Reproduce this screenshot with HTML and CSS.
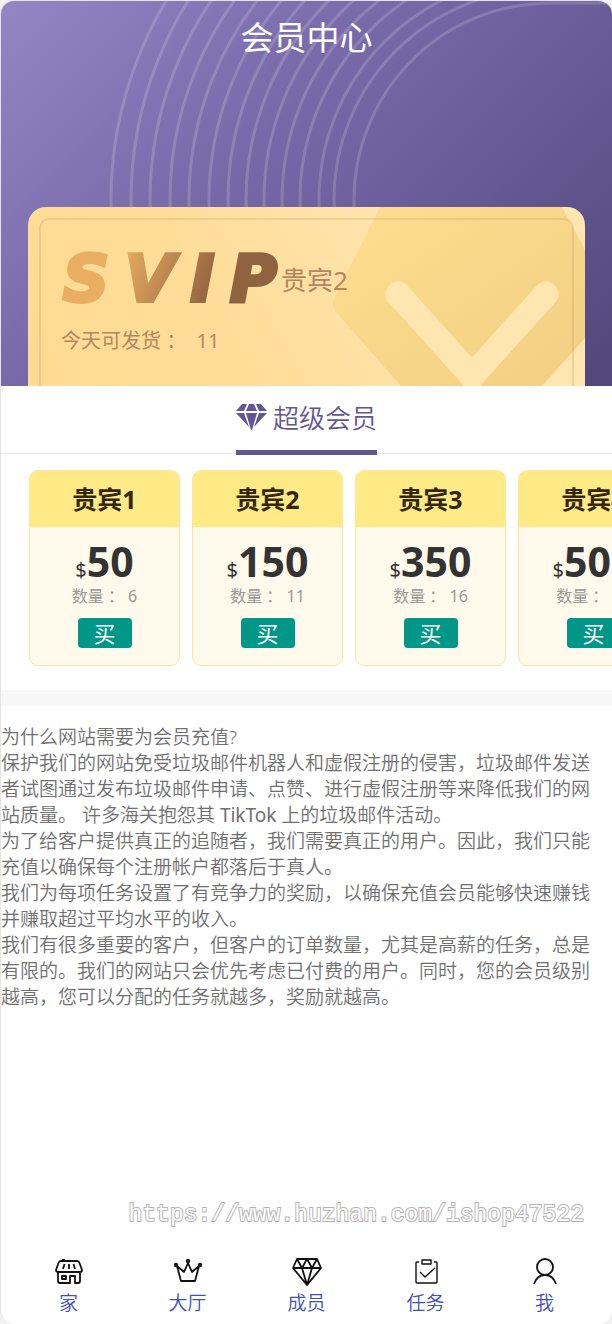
FILE: index.html
```html
<!DOCTYPE html>
<html lang="zh-CN">
<head>
    <meta charset="UTF-8">
    <meta name="viewport" content="width=device-width, initial-scale=1.0">
    <title>会员中心</title>
    <link rel="stylesheet" href="styles.css">
</head>
<body>
    <div class="page">
        <header class="hero">
            <svg class="hero-rings" width="612" height="386" viewBox="0 0 612 386" fill="none" stroke="#fff" stroke-opacity=".16" stroke-width="3" aria-hidden="true">
                <circle cx="497" cy="199" r="387"/>
                <circle cx="506" cy="199" r="376"/>
                <circle cx="504" cy="199" r="355"/>
                <circle cx="510" cy="199" r="341"/>
                <circle cx="513" cy="199" r="325"/>
                <circle cx="519" cy="199" r="311"/>
                <circle cx="525" cy="199" r="298"/>
                <circle cx="527" cy="199" r="282"/>
                <circle cx="530" cy="199" r="267"/>
                <circle cx="535" cy="199" r="254"/>
                <circle cx="540" cy="199" r="241"/>
                <circle cx="542" cy="199" r="224"/>
                <circle cx="544" cy="199" r="211"/>
                <path d="M353 212V199C353 96 434 3 550 2H612"/>
            </svg>
            <h1 class="hero-title">会员中心</h1>
            <section class="vip-card">
                <svg class="vip-card-art" width="257" height="179" viewBox="0 0 257 179" aria-hidden="true">
                    <defs>
                        <linearGradient id="hex" x1="0" y1="0" x2="1" y2="1">
                            <stop offset="0" stop-color="#ffde90"/>
                            <stop offset="1" stop-color="#f2cf82"/>
                        </linearGradient>
                    </defs>
                    <path d="M52 0H234L257 43V131L214 179H73L8 105Q3 98 6 91Z" fill="url(#hex)"/>
                    <path d="M70 87L144 169L218 87" fill="none" stroke="#ffe5b0" stroke-width="25" stroke-linecap="round"/>
                </svg>
                <div class="vip-card-inner">
                    <div class="vip-level">
                        <strong class="vip-logo"><span>S</span><span>V</span><span>I</span><span>P</span></strong>
                        <span class="vip-name">贵宾2</span>
                    </div>
                    <p class="vip-today">今天可发货 ：&nbsp; 11</p>
                </div>
            </section>
        </header>

        <div class="tabs">
            <button type="button" class="tab">
                <svg width="31" height="27" viewBox="0 0 31 27" fill="#635694" aria-hidden="true">
                    <path d="M6 0H11L8 7H0ZM13 0H18L21 7H10ZM20 0H25L31 7H23ZM0 9H8L13 23ZM10 9H21L16 26H15ZM23 9H31L18 23Z"/>
                </svg>
                <span>超级会员</span>
            </button>
        </div>

        <section class="plans">
            <article class="plan">
                <h2 class="plan-name">贵宾1</h2>
                <div class="plan-body">
                    <p class="plan-price"><small>$</small>50</p>
                    <p class="plan-count">数量 ： 6</p>
                    <button type="button" class="buy">买</button>
                </div>
            </article>
            <article class="plan">
                <h2 class="plan-name">贵宾2</h2>
                <div class="plan-body">
                    <p class="plan-price"><small>$</small>150</p>
                    <p class="plan-count">数量 ： 11</p>
                    <button type="button" class="buy">买</button>
                </div>
            </article>
            <article class="plan">
                <h2 class="plan-name">贵宾3</h2>
                <div class="plan-body">
                    <p class="plan-price"><small>$</small>350</p>
                    <p class="plan-count">数量 ： 16</p>
                    <button type="button" class="buy">买</button>
                </div>
            </article>
            <article class="plan">
                <h2 class="plan-name">贵宾4</h2>
                <div class="plan-body">
                    <p class="plan-price"><small>$</small>500</p>
                    <p class="plan-count">数量 ： 21</p>
                    <button type="button" class="buy">买</button>
                </div>
            </article>
        </section>

        <main class="about">
            <p>为什么网站需要为会员充值?</p>
            <p>保护我们的网站免受垃圾邮件机器人和虚假注册的侵害，垃圾邮件发送者试图通过发布垃圾邮件申请、点赞、进行虚假注册等来降低我们的网站质量。 许多海关抱怨其 <span class="latin">TikTok</span> 上的垃圾邮件活动。</p>
            <p>为了给客户提供真正的追随者，我们需要真正的用户。因此，我们只能充值以确保每个注册帐户都落后于真人。</p>
            <p>我们为每项任务设置了有竞争力的奖励，以确保充值会员能够快速赚钱并赚取超过平均水平的收入。</p>
            <p>我们有很多重要的客户，但客户的订单数量，尤其是高薪的任务，总是有限的。我们的网站只会优先考虑已付费的用户。同时，您的会员级别越高，您可以分配的任务就越多，奖励就越高。</p>
        </main>

        <p class="watermark">https://www.huzhan.com/ishop47522</p>

        <nav class="navbar">
            <a href="#home">
                <svg width="28" height="28" viewBox="0 0 28 28" stroke-width="1.8" aria-hidden="true">
                    <path d="M6 3H22Q24 3 24.500 5L27 12Q27 14 25 14H3Q1 14 1 12L3.500 5Q4 3 6 3ZM3 14V23Q3 25 5 25H15V18H20V25H23Q25 25 25 23V14M7 18H11V21H7ZM9.500 6L8 11M14 6V11M18.500 6L20 11M7 2H10"/>
                </svg>
                <span>家</span>
            </a>
            <a href="#hall">
                <svg width="28" height="28" viewBox="0 0 28 28" stroke-width="1.8" aria-hidden="true">
                    <path d="M3 8L7 23H21L25 8L18 14L14 5L10 14Z"/>
                    <circle cx="2" cy="7" r="1.300"/>
                    <circle cx="14" cy="3" r="1.300"/>
                    <circle cx="26" cy="7" r="1.300"/>
                </svg>
                <span>大厅</span>
            </a>
            <a href="#member">
                <svg width="30" height="28" viewBox="0 0 30 28" stroke-width="1.8" aria-hidden="true">
                    <path d="M5 1H25L29 10L15 27L1 10ZM1 10H29M5 1L10 10L15 1L20 10L25 1M10 10L15 27L20 10"/>
                </svg>
                <span>成员</span>
            </a>
            <a href="#task">
                <svg width="28" height="28" viewBox="0 0 28 28" stroke-width="1.4" aria-hidden="true">
                    <path d="M7 4H5Q4 4 4 5V24Q4 25 5 25H24Q25 25 25 24V5Q25 4 24 4H22M10 2H19V6H10ZM8 14L13 19L23 10"/>
                </svg>
                <span>任务</span>
            </a>
            <a href="#me">
                <svg width="28" height="28" viewBox="0 0 28 28" stroke-width="1.8" aria-hidden="true">
                    <circle cx="14" cy="9" r="8"/>
                    <path d="M3 26C5 20 9 17 14 17S23 20 25 26"/>
                </svg>
                <span>我</span>
            </a>
        </nav>
    </div>
</body>
</html>
```
FILE: styles.css
```css
* {
    box-sizing: border-box;
}
body {
    margin: 0;
    background: #f2f2f2;
    font-family: "Noto Sans", "Noto Sans CJK SC", sans-serif;
    color: #333;
}
h1, h2, p {
    margin: 0;
}
button {
    font-family: inherit;
    cursor: pointer;
}
.page {
    display: flex;
    flex-direction: column;
    min-height: 100vh;
    border-top: 1px solid #e4e4e4;
    border-left: 1px solid #e4e4e4;
    border-radius: 14px;
    background: #fff;
    overflow: hidden;
}

/* header */
.hero {
    position: relative;
    padding: 12px 27px 0 27px;
    background: linear-gradient(135deg, #9386c5 0%, #7769a8 40%, #51477c 100%);
    overflow: hidden;
}
.hero-rings {
    position: absolute;
    top: 0;
    left: 0;
}
.hero-title {
    position: relative;
    color: #fff;
    font-size: 33px;
    font-weight: 400;
    line-height: 50px;
    text-align: center;
}
.vip-card {
    position: relative;
    height: 179px;
    margin-top: 144px;
    padding: 11px 11px 0;
    border-radius: 18px 18px 0 0;
    background: linear-gradient(60deg, #ffdb91, #ffdd99 35%, #ffe5b0 75%);
    overflow: hidden;
}
.vip-card-art {
    position: absolute;
    top: 0;
    right: 0;
}
.vip-card-inner {
    position: relative;
    height: 168px;
    padding: 24px 20px 0;
    border: 2px solid rgba(176, 130, 90, .2);
    border-bottom: 0;
    border-radius: 10px 10px 0 0;
    color: #b48660;
}
.vip-level {
    display: flex;
    align-items: center;
    height: 70px;
}
.vip-logo {
    display: flex;
    justify-content: space-between;
    width: 220px;
    padding: 0 4px 0 2px;
    font-family: "DejaVu Sans", sans-serif;
    font-size: 64px;
    font-style: italic;
    line-height: 70px;
    background: linear-gradient(110deg, #eaae62 25%, #8f6240 70%);
    -webkit-background-clip: text;
    background-clip: text;
    color: transparent;
    -webkit-text-stroke: 4px transparent;
}
.vip-name {
    font-size: 26px;
}
.vip-today {
    margin-top: 10px;
    font-size: 20px;
    line-height: 34px;
}

/* tabs */
.tabs {
    display: flex;
    justify-content: center;
    height: 68px;
    border-bottom: 1px solid #e6e6e6;
}
.tab {
    display: flex;
    align-items: center;
    gap: 6px;
    height: 69px;
    padding: 0 0 2px;
    border: 0;
    border-bottom: 5px solid #635694;
    background: none;
    color: #635694;
    font-size: 26px;
    font-weight: 350;
}

/* plans */
.plans {
    display: flex;
    gap: 12px;
    padding: 16px 28px 24px;
    border-bottom: 16px solid #f7f7f7;
    overflow-x: auto;
    scrollbar-width: none;
}
.plan {
    flex: 0 0 151px;
    height: 196px;
    border: 1px solid #ffe59a;
    border-radius: 9px;
    background: #fffaec;
    text-align: center;
    overflow: hidden;
}
.plan-name {
    background: #ffea86;
    color: #33280f;
    font-size: 25px;
    line-height: 56px;
}
.plan-body {
    padding-top: 10px;
}
.plan-price {
    font-size: 41px;
    font-weight: 700;
    line-height: 48px;
}
.plan-price small {
    font-size: 20px;
    font-weight: 400;
    line-height: 20px;
}
.plan-count {
    color: #999;
    font-size: 16px;
    line-height: 22px;
}
.buy {
    width: 54px;
    height: 30px;
    margin-top: 11px;
    padding: 0;
    border: 0;
    border-radius: 4px;
    background: #009688;
    color: #fff;
    font-size: 22px;
    line-height: 30px;
}

.about {
    flex: 1;
    padding: 18px 16px 0 0;
    color: #707070;
    font-size: 19px;
    font-weight: 350;
    line-height: 26px;
}
.latin {
    font-weight: 400;
}

.watermark {
    padding-right: 28px;
    color: #fff;
    font-family: "Liberation Mono", monospace;
    font-size: 23px;
    line-height: 30px;
    text-align: right;
    -webkit-text-stroke: 2px #b4b4b4;
    paint-order: stroke fill;
}

/* bottom menu */
.navbar {
    display: flex;
    padding: 28px 8px 8px;
}
.navbar a {
    flex: 1;
    display: flex;
    flex-direction: column;
    align-items: center;
    gap: 4px;
    color: #3f51b5;
    font-size: 19px;
    font-weight: 350;
    line-height: 26px;
    text-decoration: none;
}
.navbar svg {
    fill: none;
    stroke: #111;
    stroke-linejoin: round;
}
```
